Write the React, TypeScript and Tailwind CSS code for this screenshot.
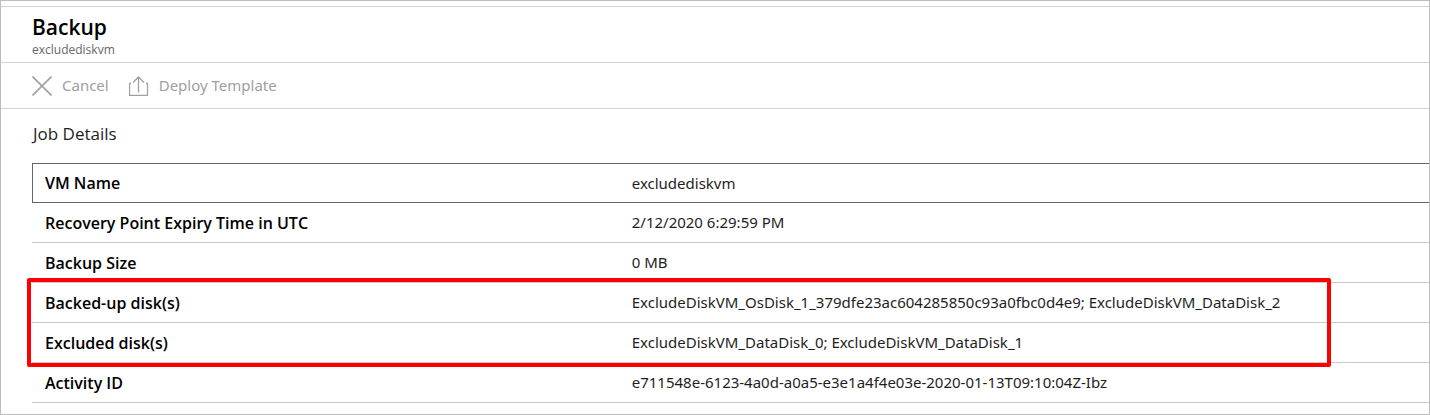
import React from 'react';

interface DetailRow {
  label: string;
  value: string;
}

const details: DetailRow[] = [
  { label: 'VM Name', value: 'excludediskvm' },
  { label: 'Recovery Point Expiry Time in UTC', value: '2/12/2020 6:29:59 PM' },
  { label: 'Backup Size', value: '0 MB' },
  {
    label: 'Backed-up disk(s)',
    value:
      'ExcludeDiskVM_OsDisk_1_379dfe23ac604285850c93a0fbc0d4e9; ExcludeDiskVM_DataDisk_2',
  },
  {
    label: 'Excluded disk(s)',
    value: 'ExcludeDiskVM_DataDisk_0; ExcludeDiskVM_DataDisk_1',
  },
  {
    label: 'Activity ID',
    value: 'e711548e-6123-4a0d-a0a5-e3e1a4f4e03e-2020-01-13T09:10:04Z-Ibz',
  },
];

function CancelIcon() {
  return (
    <svg className="w-5 h-5" viewBox="0 0 20 20" fill="none" stroke="currentColor">
      <path strokeWidth={1.6} d="M0.5 0.5l19 19M19.5 0.5l-19 19" />
    </svg>
  );
}

function DeployIcon() {
  return (
    <svg className="w-5 h-5" viewBox="0 0 20 20" fill="none" stroke="currentColor">
      <path strokeWidth={1.3} d="M2 7.5H0.5v12h18v-12H17" />
      <path strokeWidth={1.3} d="M9.5 16.5V1M4 6.5l5.5-5.5L15 6.5" />
    </svg>
  );
}

function Toolbar() {
  return (
    <div className="flex items-center gap-5 h-[46px] px-[31px] border-b border-[#d2d2d2] text-[15px] text-[#a0a0a0]">
      <button type="button" className="flex items-center gap-2.5">
        <CancelIcon />
        Cancel
      </button>
      <button type="button" className="flex items-center gap-2.5">
        <DeployIcon />
        Deploy Template
      </button>
    </div>
  );
}

function DetailsTable() {
  return (
    <div className="relative ml-[31px]">
      <table className="w-full table-fixed border-separate border-spacing-0 text-left">
        <tbody>
          {details.map(({ label, value }, index) => {
            const selected = index === 0;
            const line = selected
              ? 'h-10 border-y border-[#666]'
              : 'h-10 border-b border-[#c8c8c8]';
            return (
              <tr key={label}>
                <th
                  scope="row"
                  className={`${line} w-[42%] font-['Open_Sans',sans-serif] font-semibold text-base text-black ${
                    selected ? 'border-l pl-3' : 'pl-[13px]'
                  }`}
                >
                  {label}
                </th>
                <td className={`${line} pl-[13px] text-[15px] whitespace-nowrap`}>
                  {value}
                </td>
              </tr>
            );
          })}
        </tbody>
      </table>
      <div className="absolute top-[115px] -left-[5px] right-[98px] h-[89px] border-4 border-[#ff0000] rounded-xs pointer-events-none" />
    </div>
  );
}

export default function App() {
  return (
    <main className="border border-[#bdbdbd] bg-white pt-[5px] pb-[11px] font-['Noto_Sans','Open_Sans',sans-serif] text-[#1e1e1e]">
      <header className="h-[57px] px-[31px] pt-[6px] border-y border-[#d2d2d2] font-['Open_Sans',sans-serif]">
        <h1 className="text-[21px] leading-[29px] font-semibold text-black">Backup</h1>
        <p className="text-xs leading-4 text-[#666]">excludediskvm</p>
      </header>
      <Toolbar />
      <h2 className="h-[54px] px-8 pt-[13px] font-['Open_Sans',sans-serif] text-[17px] leading-6">
        Job Details
      </h2>
      <DetailsTable />
    </main>
  );
}
